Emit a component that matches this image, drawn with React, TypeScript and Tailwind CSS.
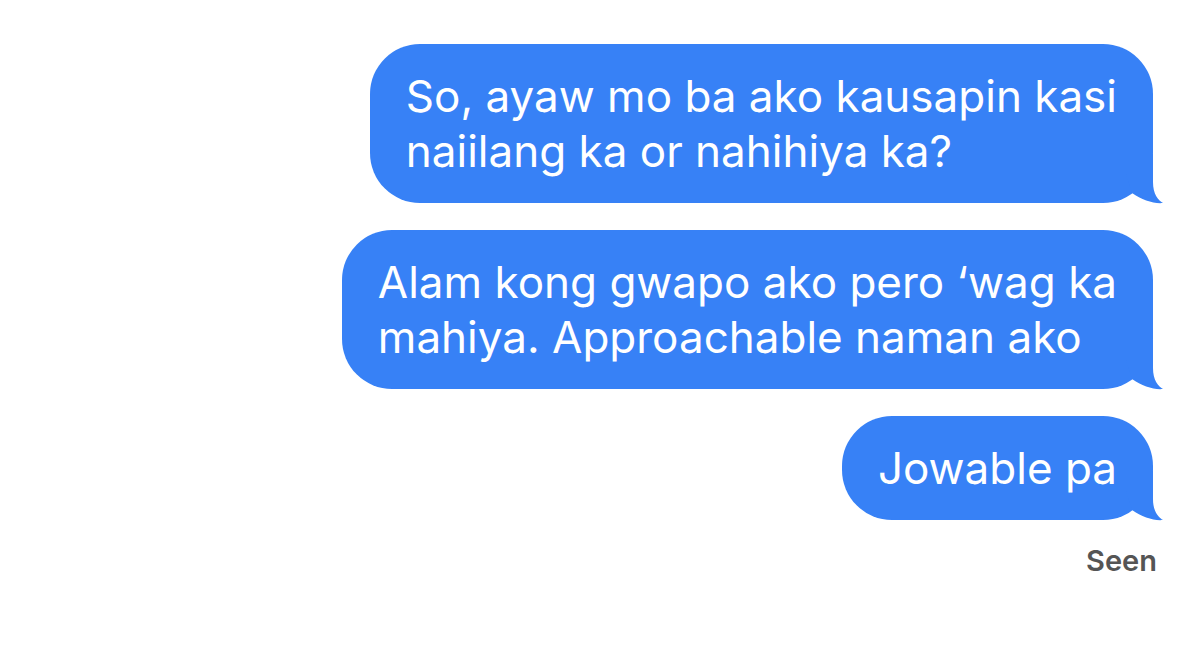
import React from "react";

const BLUE = "#3781f6";

function Tail() {
  return (
    <svg
      className="absolute right-[-13px] bottom-[-1px]"
      width="60"
      height="50"
      viewBox="0 0 60 50"
    >
      <path
        d="M20,0 L47,0 L47,28 C47,40 52,46 57,49 C48,50 36,46 26,39 L20,20 Z"
        fill={BLUE}
      />
    </svg>
  );
}

function Bubble({ children }: { children: React.ReactNode }) {
  return (
    <div className="relative rounded-[50px] bg-[#3781f6] px-[36px] py-[24.5px] text-[44px] leading-[55px] text-white">
      {children}
      <Tail />
    </div>
  );
}

export default function App() {
  return (
    <div
      className="flex h-[654px] w-[1200px] flex-col items-end gap-[27px] bg-white pr-[47px] pt-[44px]"
      style={{ fontFamily: "Inter, 'Noto Sans', sans-serif" }}
    >
      <Bubble>
        So, ayaw mo ba ako kausapin kasi
        <br />
        naiilang ka or nahihiya ka?
      </Bubble>
      <Bubble>
        Alam kong gwapo ako pero ‘wag ka
        <br />
        mahiya. Approachable naman ako
      </Bubble>
      <Bubble>Jowable pa</Bubble>
      <div className="-mt-[2px] mr-[-4px] text-[29px] font-semibold leading-[32px] text-[#555555]">
        Seen
      </div>
    </div>
  );
}
